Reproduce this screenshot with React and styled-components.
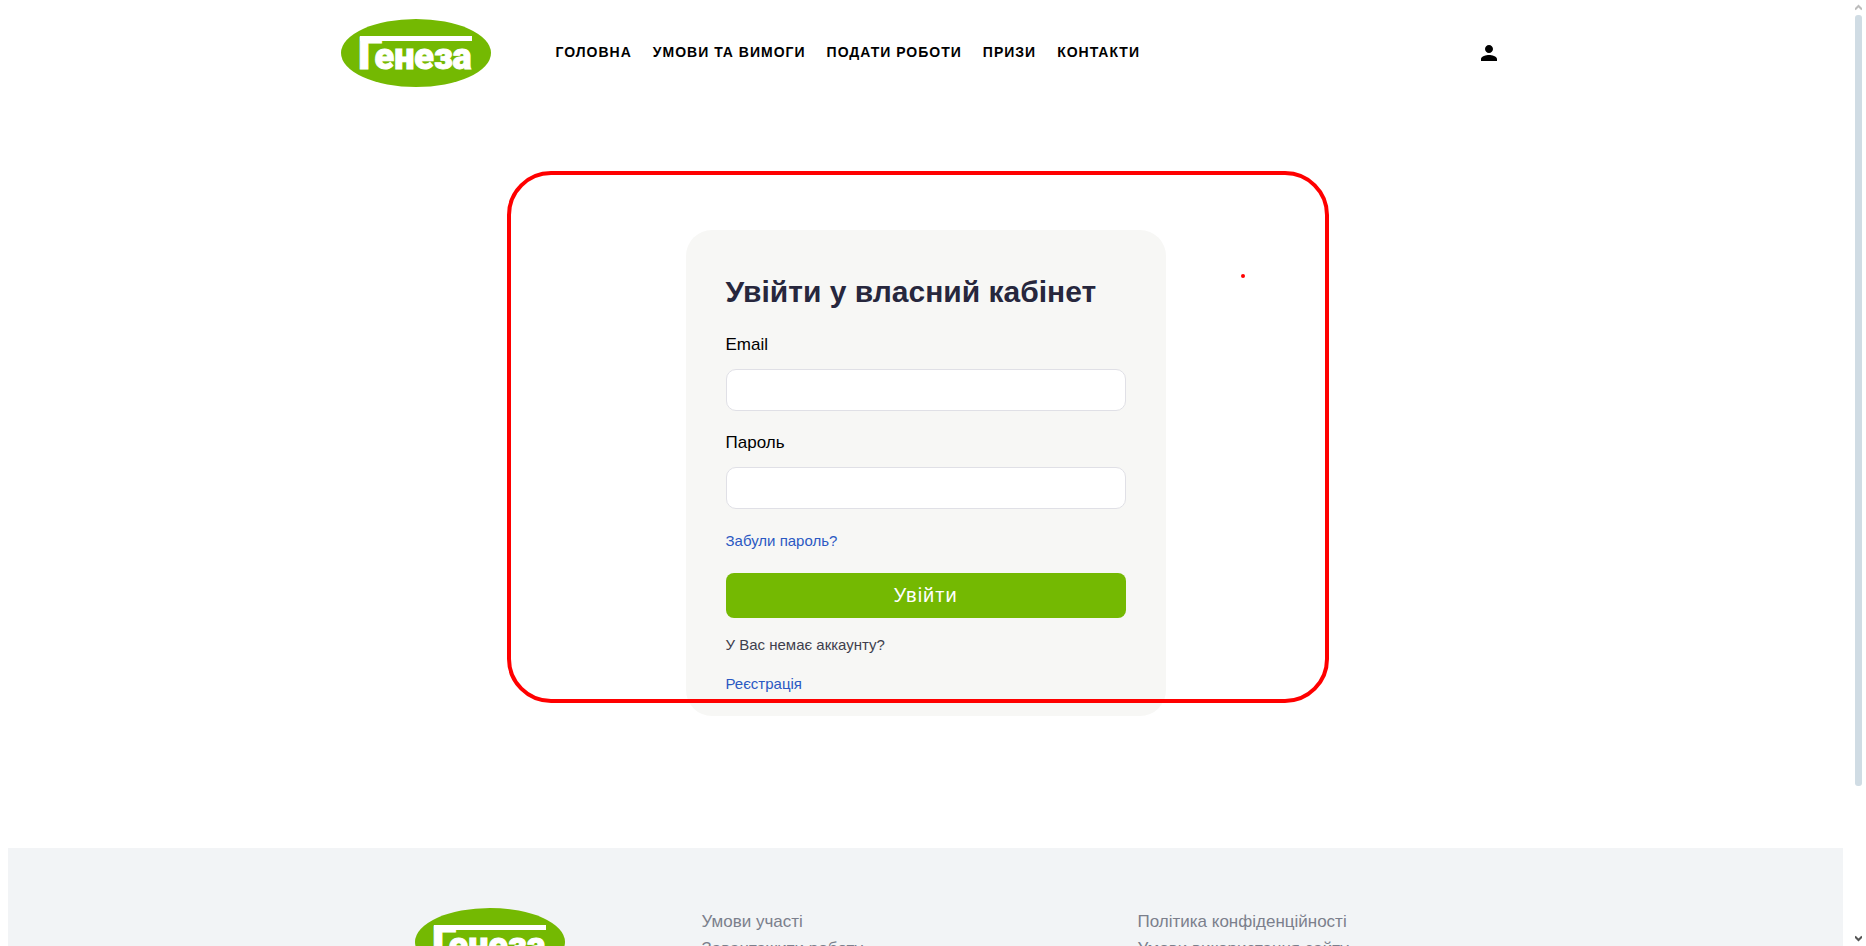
import React from "react";
import styled, { createGlobalStyle } from "styled-components";

const GlobalStyle = createGlobalStyle`
  *, *::before, *::after { box-sizing: border-box; }
  body {
    margin: 0;
    background: #fff;
    color: #000;
    font-family: "Liberation Sans", Arial, sans-serif;
  }
`;

const Window = styled.div`
  display: flex;
  height: 100vh;
  overflow: hidden;
`;

const Page = styled.div`
  flex: 1;
  min-width: 0;
  padding: 0 8px;
`;

const Container = styled.div`
  width: 100%;
  max-width: 1200px;
  margin: 0 auto;
`;

const Header = styled(Container)`
  display: flex;
  align-items: center;
  height: 106px;
  padding: 0 25px 0 15px;
`;

const LogoLink = styled.a`
  display: block;
  width: 150px;
  height: 68px;
  text-decoration: none;

  svg { display: block; }
`;

const LogoText = styled.text`
  font-family: Roboto, "Liberation Sans", sans-serif;
  font-weight: 900;
  font-size: 36px;
  fill: #fff;
  stroke: #fff;
  stroke-width: 1;
`;

const LogoInitial = styled.tspan`
  font-size: 44px;
`;

const Nav = styled.nav`
  flex: 1;
  display: flex;
  gap: 21px;
  margin-left: 65px;
  padding-bottom: 2px;
`;

const NavLink = styled.a`
  color: #000;
  font-size: 14px;
  line-height: 20px;
  font-weight: 700;
  letter-spacing: 1px;
  text-transform: uppercase;
  text-decoration: none;
  white-space: nowrap;
`;

const IconButton = styled.button`
  display: flex;
  padding: 0;
  border: 0;
  background: none;
  color: #000;
  cursor: pointer;
`;

const Main = styled.main`
  display: flex;
  justify-content: center;
  padding: 124px 0 132px;
`;

const CardArea = styled.div`
  position: relative;
  width: 480px;
`;

const Card = styled.form`
  display: flex;
  flex-direction: column;
  gap: 20px;
  padding: 40px 40px 20px;
  border-radius: 26px;
  background: #f7f7f5;
`;

const Title = styled.h1`
  margin: 0;
  color: #27273d;
  font-size: 30px;
  line-height: 43px;
  font-weight: 700;
  white-space: nowrap;
`;

const Field = styled.div`
  display: flex;
  flex-direction: column;
  gap: 12px;
`;

const Label = styled.label`
  font-size: 17px;
  line-height: 24px;
`;

const Input = styled.input`
  width: 100%;
  height: 42px;
  padding: 0 12px;
  border: 1px solid #e0e0e6;
  border-radius: 10px;
  background: #fff;
  font: inherit;
  font-size: 17px;
`;

const TextLink = styled.a`
  align-self: flex-start;
  color: #2b59c3;
  font-size: 15px;
  line-height: 24px;
  text-decoration: none;
`;

const Actions = styled.div`
  display: flex;
  flex-direction: column;
  gap: 15px;
`;

const SubmitButton = styled.button`
  height: 45px;
  border: 0;
  border-radius: 8px;
  background: #74b902;
  color: #fff;
  font-family: inherit;
  font-size: 20px;
  letter-spacing: 1px;
  cursor: pointer;
`;

const Hint = styled.p`
  margin: 0;
  color: #3f3f4d;
  font-size: 15px;
  line-height: 24px;
`;

const Highlight = styled.div`
  position: absolute;
  inset: -59px -163px 13px -179px;
  border: 4px solid #f00;
  border-radius: 44px;
  pointer-events: none;
`;

const Dot = styled.span`
  position: absolute;
  top: 44px;
  left: 555px;
  width: 4px;
  height: 4px;
  border-radius: 50%;
  background: #f00;
`;

const Footer = styled.footer`
  padding: 60px 0;
  background: #f2f4f6;
`;

const FooterGrid = styled(Container)`
  display: grid;
  grid-template-columns: 287px 436px 1fr;
  padding-left: 89px;
`;

const FooterLinks = styled.div`
  display: flex;
  flex-direction: column;
  align-items: flex-start;
`;

const FooterLink = styled.a`
  color: #7b7f8c;
  font-size: 17px;
  line-height: 27px;
  text-decoration: none;
`;

const Scrollbar = styled.div`
  display: flex;
  flex-direction: column;
  align-items: center;
  width: 15px;
  padding: 4px 0;
`;

const Track = styled.div`
  flex: 1;
  width: 7px;
  margin: 4px 0;
`;

const Thumb = styled.div`
  height: calc(100% * 16 / 19);
  border-radius: 3px;
  background: #d0dce4;
`;

const navItems = ["Головна", "Умови та вимоги", "Подати роботи", "Призи", "Контакти"];
const footerColumns = [
  ["Умови участі", "Завантажити роботу"],
  ["Політика конфіденційності", "Умови використання сайту"],
];

function Logo() {
  return (
    <LogoLink href="#" aria-label="Генеза">
      <svg width="150" height="68" viewBox="0 0 150 68">
        <ellipse cx="75" cy="34" rx="75" ry="34" fill="#74b902" />
        <rect x="19" y="17" width="112" height="5" fill="#fff" />
        <LogoText x="17" y="50">
          <LogoInitial>Г</LogoInitial>
          <tspan dx="-8">енеза</tspan>
        </LogoText>
      </svg>
    </LogoLink>
  );
}

function Arrow({ d, color }) {
  return (
    <svg width="7" height="7" viewBox="0 0 7 7" fill="none" stroke={color} strokeWidth="2">
      <path d={d} />
    </svg>
  );
}

export default function App() {
  return (
    <>
      <GlobalStyle />
      <Window>
        <Page>
          <Header as="header">
            <Logo />
            <Nav>
              {navItems.map((item) => (
                <NavLink key={item} href="#">{item}</NavLink>
              ))}
            </Nav>
            <IconButton type="button" aria-label="Кабінет">
              <svg width="24" height="24" viewBox="0 0 24 24" fill="currentColor">
                <path d="M12 12c2.21 0 4-1.79 4-4s-1.79-4-4-4-4 1.79-4 4 1.79 4 4 4zm0 2c-2.67 0-8 1.34-8 4v2h16v-2c0-2.66-5.33-4-8-4z" />
              </svg>
            </IconButton>
          </Header>
          <Main>
            <CardArea>
              <Card onSubmit={(e) => e.preventDefault()}>
                <Title>Увійти у власний кабінет</Title>
                <Field>
                  <Label htmlFor="email">Email</Label>
                  <Input id="email" type="email" />
                </Field>
                <Field>
                  <Label htmlFor="password">Пароль</Label>
                  <Input id="password" type="password" />
                </Field>
                <TextLink href="#">Забули пароль?</TextLink>
                <Actions>
                  <SubmitButton type="submit">Увійти</SubmitButton>
                  <Hint>У Вас немає аккаунту?</Hint>
                  <TextLink href="#">Реєстрація</TextLink>
                </Actions>
              </Card>
              <Highlight />
              <Dot />
            </CardArea>
          </Main>
          <Footer>
            <FooterGrid>
              <Logo />
              {footerColumns.map((links) => (
                <FooterLinks key={links[0]}>
                  {links.map((link) => (
                    <FooterLink key={link} href="#">{link}</FooterLink>
                  ))}
                </FooterLinks>
              ))}
            </FooterGrid>
          </Footer>
        </Page>
        <Scrollbar aria-hidden="true">
          <Arrow d="M0 5.5 3.5 2 7 5.5" color="#bcbcbc" />
          <Track>
            <Thumb />
          </Track>
          <Arrow d="M0 1.5 3.5 5 7 1.5" color="#555" />
        </Scrollbar>
      </Window>
    </>
  );
}
